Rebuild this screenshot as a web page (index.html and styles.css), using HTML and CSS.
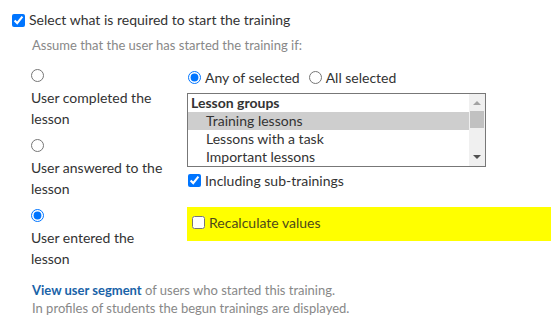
FILE: index.html
```html
<!DOCTYPE html>
<html>
<head>
<meta charset="utf-8">
<link rel="stylesheet" href="styles.css">
</head>
<body>
<div class="page">
  <label class="title"><input type="checkbox" class="cb" checked>Select what is required to start the training</label>
  <div class="subtitle">Assume that the user has started the training if:</div>
  <div class="cols">
    <div class="left">
      <div class="opt"><input type="radio" name="r" class="rd"><div class="opt-text">User completed the lesson</div></div>
      <div class="opt"><input type="radio" name="r" class="rd"><div class="opt-text">User answered to the lesson</div></div>
      <div class="opt"><input type="radio" name="r" class="rd" checked><div class="opt-text">User entered the lesson</div></div>
    </div>
    <div class="right">
      <div class="mode">
        <label class="mode-item"><input type="radio" name="m" class="rd" checked>Any of selected</label>
        <label class="mode-item"><input type="radio" name="m" class="rd">All selected</label>
      </div>
      <div class="listbox">
        <div class="list-items">
          <div class="group">Lesson groups</div>
          <div class="item sel">Training lessons</div>
          <div class="item">Lessons with a task</div>
          <div class="item">Important lessons</div>
        </div>
        <div class="scrollbar">
          <div class="arrow up"></div>
          <div class="thumb"></div>
          <div class="track"></div>
          <div class="arrow down"></div>
        </div>
      </div>
      <label class="sub"><input type="checkbox" class="cb" checked>Including sub-trainings</label>
      <div class="recalc"><label><input type="checkbox" class="cb">Recalculate values</label></div>
    </div>
  </div>
  <div class="footer">
    <div><a class="link">View user segment</a> of users who started this training.</div>
    <div>In profiles of students the begun trainings are displayed.</div>
  </div>
</div>
</body>
</html>
```
FILE: styles.css
```css
html, body { margin: 0; padding: 0; background: #fff; }
body { font-family: Lato, "Open Sans", sans-serif; font-size: 14px; color: #333; }
.page { padding: 10px 0 0 11px; }
.title { display: flex; align-items: center; height: 20px; line-height: 20px; }
.cb { width: 13px; height: 13px; margin: 0 4px 0 1px; accent-color: #0075ff; flex: none; }
.rd { width: 13px; height: 13px; margin: 0 4px 0 1px; accent-color: #0075ff; flex: none; }
.subtitle { color: #888; font-size: 13px; margin: 6px 0 0 21px; line-height: 18px; }
.cols { display: flex; margin-top: 14px; padding-left: 20px; }
.left { width: 136px; margin-right: 20px; }
.opt { display: flex; flex-direction: column; align-items: flex-start; }
.opt .rd { margin: 1px 0 0 0; }
.opt-text { line-height: 21px; margin: 5px 0 9px; }
.right { width: 364px; }
.mode { display: flex; gap: 8px; height: 18px; align-items: center; }
.mode-item { display: flex; align-items: center; }
.listbox { margin-top: 7px; width: 297px; height: 72px; border: 1px solid #777; display: flex; }
.list-items { flex: 1; line-height: 18px; }
.group { font-weight: bold; padding-left: 3px; }
.item { padding-left: 18px; }
.item.sel { background: #cecece; }
.scrollbar { width: 16px; background: #f0f0f0; display: flex; flex-direction: column; }
.arrow { height: 17px; position: relative; }
.arrow::after { content: ""; position: absolute; left: 4px; border-left: 4px solid transparent; border-right: 4px solid transparent; }
.arrow.up::after { top: 7px; border-bottom: 4px solid #a3a3a3; }
.arrow.down::after { top: 6px; border-top: 4px solid #505050; }
.thumb { height: 17px; background: #c1c1c1; margin: 0 1px; }
.track { flex: 1; }
.sub { display: flex; align-items: center; margin-top: 3px; height: 20px; }
.recalc { margin-top: 17px; background: #ffff00; height: 29px; padding: 5px 0 0 4px; color: #4d4a1a; }
.recalc label { display: flex; align-items: center; height: 20px; }
.footer { margin: 3px 0 0 21px; color: #888; font-size: 13px; line-height: 18px; }
.link { color: #1a63a8; font-weight: bold; text-decoration: none; }
```
